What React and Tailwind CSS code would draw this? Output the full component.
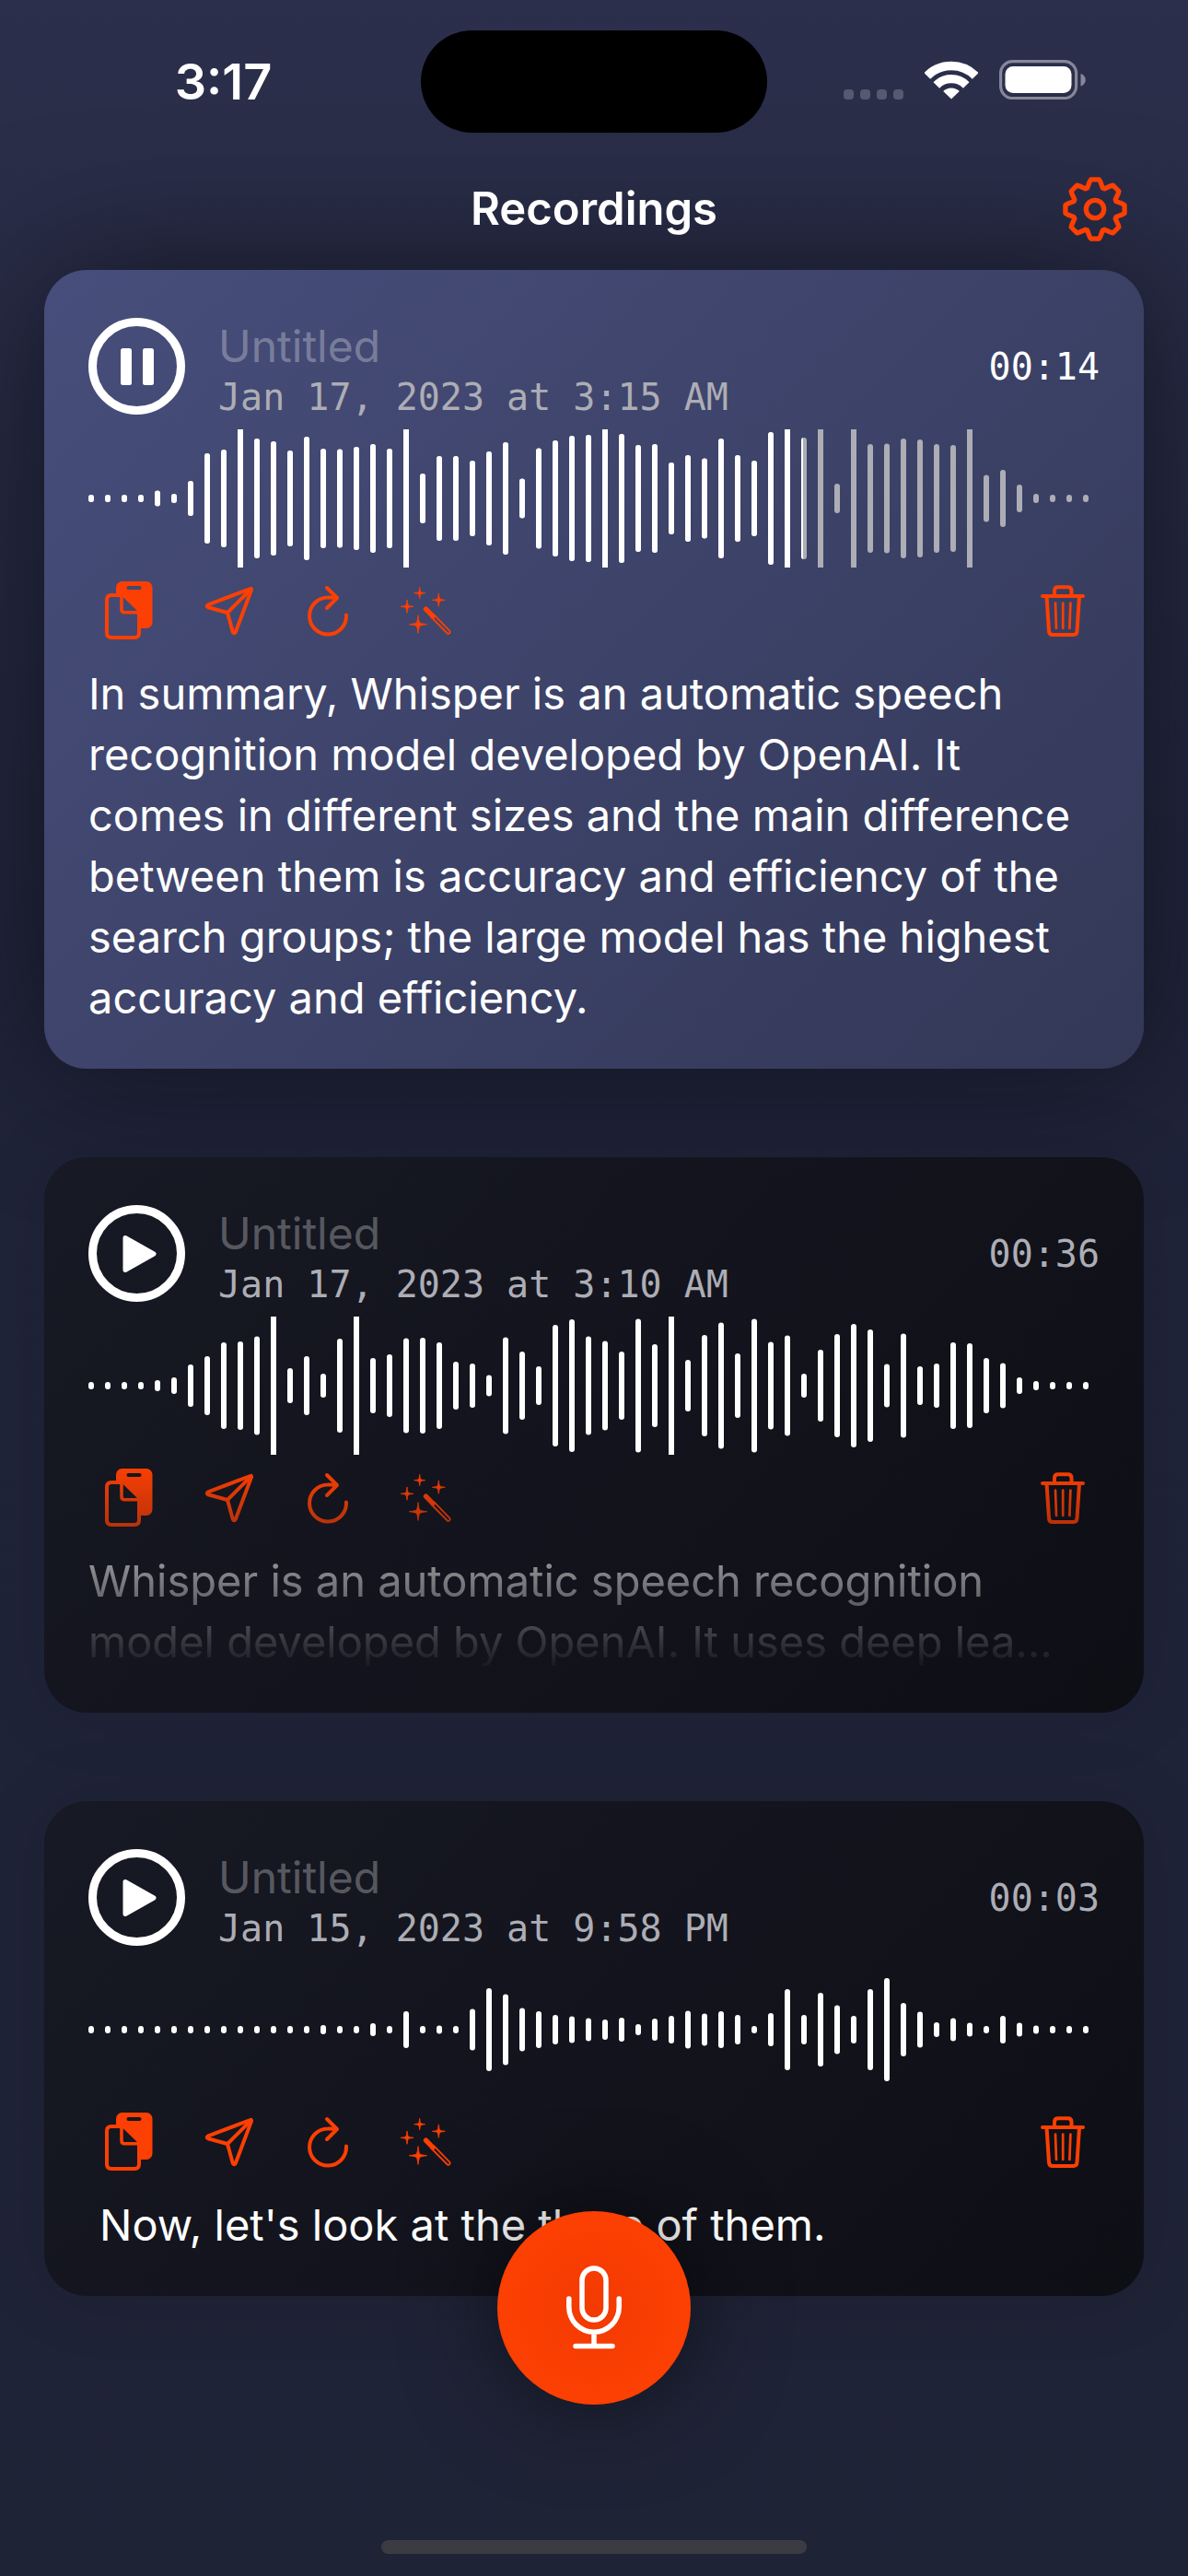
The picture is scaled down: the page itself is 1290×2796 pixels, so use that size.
import React, { useId } from "react";

const recordings = [
  {
    id: "rec-1",
    date: "Jan 17, 2023 at 3:15 AM",
    duration: "00:14",
    playing: true,
    progress: 776,
    text: "In summary, Whisper is an automatic speech recognition model developed by OpenAI. It comes in different sizes and the main difference between them is accuracy and efficiency of the search groups; the large model has the highest accuracy and efficiency.",
    bars: [
      8, 8, 8, 8, 17, 10, 38, 98, 106, 150, 130, 124, 104, 134, 108, 107, 112,
      118, 108, 150, 54, 92, 92, 82, 102, 122, 43, 109, 126, 136, 138, 150, 140,
      116, 118, 78, 94, 87, 130, 94, 82, 144, 150, 132, 150, 32, 150, 118, 119,
      130, 128, 118, 116, 150, 51, 62, 30, 10, 8, 8, 8,
    ],
  },
  {
    id: "rec-2",
    date: "Jan 17, 2023 at 3:10 AM",
    duration: "00:36",
    faded: true,
    text: "Whisper is an automatic speech recognition model developed by OpenAI. It uses deep lea…",
    bars: [
      8, 8, 8, 8, 12, 18, 46, 64, 94, 96, 107, 150, 38, 64, 26, 102, 150, 60, 68,
      103, 104, 94, 52, 48, 23, 105, 74, 42, 132, 144, 107, 97, 74, 145, 90, 150,
      56, 110, 137, 70, 145, 95, 109, 26, 78, 112, 134, 122, 47, 113, 42, 48, 94,
      92, 60, 49, 18, 10, 8, 8, 8,
    ],
  },
  {
    id: "rec-3",
    date: "Jan 15, 2023 at 9:58 PM",
    duration: "00:03",
    indented: true,
    text: "Now, let's look at the three of them.",
    bars: [
      8, 8, 8, 8, 8, 8, 8, 8, 8, 8, 8, 8, 8, 8, 10, 8, 8, 14, 8, 40, 8, 9, 8, 45,
      90, 77, 47, 40, 32, 29, 25, 22, 26, 12, 24, 30, 41, 35, 40, 32, 8, 36, 88,
      32, 80, 53, 30, 88, 112, 58, 39, 16, 25, 15, 8, 30, 15, 9, 8, 8, 8,
    ],
  },
];

function Bars({ bars, fill }) {
  return bars.map((h, i) => (
    <rect
      key={i}
      x={i * 18}
      y={75 - h / 2}
      width={6}
      height={h}
      rx={h >= 150 ? 0 : 3}
      fill={fill}
    />
  ));
}

function Waveform({ bars, progress }) {
  const clip = useId();
  return (
    <svg
      viewBox="0 0 1098 150"
      preserveAspectRatio="xMinYMid meet"
      className="mt-3 block h-[150px] w-full"
      aria-hidden="true"
    >
      {progress === undefined ? (
        <Bars bars={bars} fill="#fff" />
      ) : (
        <>
          <clipPath id={clip}>
            <rect width={progress} height="150" />
          </clipPath>
          <Bars bars={bars} fill="#adadb5" />
          <g clipPath={`url(#${clip})`}>
            <Bars bars={bars} fill="#fff" />
          </g>
        </>
      )}
    </svg>
  );
}

function ActionButton({ label, children }) {
  return (
    <button type="button" aria-label={label} className="block h-[68px] w-16">
      <svg
        viewBox="0 0 64 68"
        className="block h-[68px] w-16"
        fill="none"
        stroke="#fc3f03"
        strokeWidth="4"
        strokeLinecap="round"
        strokeLinejoin="round"
      >
        {children}
      </svg>
    </button>
  );
}

function CopyIcon() {
  const mask = useId();
  return (
    <>
      <mask id={mask}>
        <rect width="64" height="68" fill="#fff" stroke="none" />
        <path d="M8 18H24L26 20.5L41 35L43 37V66H8Z" fill="#000" stroke="none" />
        <path d="M31.5 10H43.5" stroke="#000" />
      </mask>
      <rect
        x="18"
        y="3"
        width="39.5"
        height="51"
        rx="6.5"
        fill="#fc3f03"
        stroke="none"
        mask={`url(#${mask})`}
      />
      <path d="M24 18H13Q8 18 8 23V59Q8 64 13 64H38Q43 64 43 59V37" />
      <path d="M24 18V33.500Q24 36.700 27.200 36.700H43" strokeWidth="3.600" />
    </>
  );
}

function SendIcon() {
  return (
    <>
      <path d="M55.800 11L10 28.400Q7.500 30 10 31.200L31 37L36.800 58Q38.300 60.500 39.800 58L57 12.400Q57.300 10.300 55.800 11Z" />
      <path d="M56 12L31 37" />
    </>
  );
}

function RetryIcon() {
  return (
    <>
      <path d="M52 39.500A20 20 0 1 1 32 20.500Q37 20.300 41 21" />
      <path d="M31 10L42 21L31 32" />
    </>
  );
}

function Sparkle({ x, y, r }) {
  const k = r * 0.2;
  return (
    <path
      stroke="#fc3f03"
      strokeWidth="0.800"
      fill="#fc3f03"
      d={`M${x} ${y - r}Q${x + k / 2} ${y - k} ${x + k} ${y - k}Q${x + k} ${y - k / 2} ${x + r} ${y}Q${x + k} ${y + k / 2} ${x + k} ${y + k}Q${x + k / 2} ${y + k} ${x} ${y + r}Q${x - k / 2} ${y + k} ${x - k} ${y + k}Q${x - k} ${y + k / 2} ${x - r} ${y}Q${x - k} ${y - k / 2} ${x - k} ${y - k}Q${x - k / 2} ${y - k} ${x} ${y - r}Z`}
    />
  );
}

function WandIcon() {
  return (
    <>
      <Sparkle x={23.7} y={15.7} r={6} />
      <Sparkle x={44.3} y={23.3} r={7} />
      <Sparkle x={10} y={30.3} r={7} />
      <Sparkle x={22} y={49.7} r={9.7} />
      <path d="M30.500 33.200L38 40.800" strokeWidth="5.400" />
      <path
        strokeWidth="1.800"
        d="M36.500 42L53.800 59.500Q55 60.300 56.200 59.200Q57.300 58 56.400 56.800L39.200 39.200"
      />
    </>
  );
}

function TrashIcon() {
  return (
    <>
      <path d="M10 19H54M23 19V13Q23 9.300 27 9.300H37.500Q41.500 9.300 41.500 13V19" />
      <path d="M14.500 19L17 57Q17.300 61 21 61H43.500Q47.300 61 47.500 57L50 19" />
      <path strokeWidth="2.700" d="M24 26.500L25 54M32.200 26.500V54M40.400 26.500L39.400 54" />
    </>
  );
}

function gearOutline() {
  const points = [];
  const put = (radius, degrees) => {
    const a = ((degrees - 90) * Math.PI) / 180;
    points.push(
      `${(35 + radius * Math.cos(a)).toFixed(2)} ${(35 + radius * Math.sin(a)).toFixed(2)}`
    );
  };
  for (let t = 0; t < 8; t++) {
    const c = t * 45;
    put(24.5, c - 20);
    put(30, c - 11.5);
    put(32.4, c - 8);
    put(32.4, c + 8);
    put(30, c + 11.5);
    put(24.5, c + 20);
  }
  return `M${points.join("L")}Z`;
}

function GearIcon() {
  return (
    <svg
      viewBox="0 0 70 70"
      className="block size-[70px]"
      fill="none"
      stroke="#fc3f03"
      strokeWidth="5.300"
      strokeLinejoin="round"
    >
      <path d={gearOutline()} />
      <circle cx="35" cy="35" r="9.700" />
    </svg>
  );
}

function StatusBar() {
  return (
    <div className="relative z-10 grid h-[160px] grid-cols-[1fr_376px_1fr] items-start pt-[33px]">
      <div className="flex h-[111px] items-center justify-center pl-7 text-[54px] leading-none font-semibold">
        3:17
      </div>
      <div className="h-[111px] rounded-full bg-black" />
      <div className="flex h-[107px] items-center justify-center pr-7">
        <div className="mr-[23px] flex h-[43px] items-end gap-[7px]">
          {[0, 1, 2, 3].map((i) => (
            <span key={i} className="size-[11px] rounded-[4px] bg-[#565a70]" />
          ))}
        </div>
        <svg
          viewBox="0 0 58 43"
          className="block h-[43px] w-[58px]"
          fill="none"
          stroke="#fff"
          aria-label="Wi-Fi"
        >
          <path strokeWidth="9.500" d="M2.800 17.400A36.800 36.800 0 0 1 55.200 17.400" />
          <path strokeWidth="9.200" d="M12.800 27.500A22.700 22.700 0 0 1 45.200 27.500" />
          <path d="M29 42.500L20.200 34A12.500 12.500 0 0 1 37.800 34Z" fill="#fff" stroke="none" />
        </svg>
        <svg
          viewBox="0 0 95 43"
          className="ml-[23px] block h-[43px] w-[95px]"
          aria-label="Battery"
        >
          <rect x="1.600" y="1.600" width="82" height="40" rx="13" fill="none" stroke="#858899" strokeWidth="3.200" />
          <rect x="6.500" y="7" width="72" height="29" rx="8.500" fill="#fff" />
          <path d="M88.500 15C95.500 17 95.500 26.500 88.500 28.500Z" fill="#858899" />
        </svg>
      </div>
    </div>
  );
}

function PlayButton({ playing }) {
  return (
    <button
      type="button"
      aria-label={playing ? "Pause" : "Play"}
      className="flex size-[105px] shrink-0 items-center justify-center rounded-full border-[9px] border-white"
    >
      <svg viewBox="0 0 48 48" className="block size-12 fill-white stroke-white">
        {playing ? (
          <>
            <rect x="6" y="4" width="12" height="40" rx="2.500" stroke="none" />
            <rect x="30" y="4" width="12" height="40" rx="2.500" stroke="none" />
          </>
        ) : (
          <path
            d="M11 6.500L42 24L11 41.500Z"
            strokeWidth="5"
            strokeLinejoin="round"
          />
        )}
      </svg>
    </button>
  );
}

function RecordingCard({ rec }) {
  return (
    <article
      className={
        rec.playing
          ? "rounded-[46px] bg-linear-135 from-[#474e7b] to-[#333857] px-12 pt-12 pb-11 shadow-[0_0_150px_rgba(0,0,0,0.5)]"
          : "rounded-[46px] bg-linear-135 from-[#171924] to-[#0e0e15] px-12 pt-12 pb-11 shadow-[0_0_80px_rgba(0,0,0,0.12)]"
      }
    >
      <div className="flex h-[113px] items-center gap-9">
        <PlayButton playing={rec.playing} />
        <div className="min-w-0 flex-1 pt-0.5">
          <input
            type="text"
            aria-label="Recording title"
            placeholder="Untitled"
            className="block h-16 w-full bg-transparent text-[48px] placeholder:text-white/30 focus:outline-none"
          />
          <div className="font-['DejaVu_Sans_Mono',monospace] text-[40px] leading-[46px] text-[#adadb5]">
            {rec.date}
          </div>
        </div>
        <div
          className={
            rec.playing
              ? "font-['DejaVu_Sans_Mono',monospace] text-[40px] leading-[46px] text-white"
              : "font-['DejaVu_Sans_Mono',monospace] text-[40px] leading-[46px] text-[#adadb5]"
          }
        >
          {rec.duration}
        </div>
      </div>
      <Waveform bars={rec.bars} progress={rec.progress} />
      <div
        className={
          rec.faded ? "mt-3 mask-linear-180 mask-linear-from-0% mask-linear-to-100%" : "mt-3"
        }
      >
        <div className="flex gap-11 pr-2 pl-3">
          <ActionButton label="Copy">
            <CopyIcon />
          </ActionButton>
          <ActionButton label="Share">
            <SendIcon />
          </ActionButton>
          <ActionButton label="Transcribe again">
            <RetryIcon />
          </ActionButton>
          <ActionButton label="Enhance">
            <WandIcon />
          </ActionButton>
          <div className="ml-auto">
            <ActionButton label="Delete">
              <TrashIcon />
            </ActionButton>
          </div>
        </div>
        <p className={rec.indented ? "mt-6 pl-3 text-[47px] leading-[66px]" : "mt-6 text-[47px] leading-[66px]"}>
          {rec.text}
        </p>
      </div>
    </article>
  );
}

export default function App() {
  return (
    <div className="flex min-h-screen flex-col bg-linear-to-b from-[#2b2f4b] via-[#20243a] via-40% to-[#1f2336] font-['Inter',sans-serif] text-white">
      <StatusBar />
      <header className="relative z-10 grid h-[133px] grid-cols-[1fr_auto_1fr] items-center px-[66px]">
        <h1 className="col-start-2 text-[49px] leading-none font-semibold">Recordings</h1>
        <button type="button" aria-label="Settings" className="justify-self-end">
          <GearIcon />
        </button>
      </header>
      <main className="flex flex-col gap-24 px-12 pb-[304px]">
        {recordings.map((rec) => (
          <RecordingCard key={rec.id} rec={rec} />
        ))}
      </main>
      <button
        type="button"
        aria-label="Record"
        className="fixed bottom-[186px] left-1/2 flex size-[210px] -translate-x-1/2 items-center justify-center rounded-full bg-radial from-[#f23a02] to-[#fc3f02] to-60% shadow-[0_0_100px_rgba(0,0,0,0.5)]"
      >
        <svg
          viewBox="0 0 60 92"
          className="block h-[92px] w-[60px]"
          fill="none"
          stroke="#fff"
          strokeWidth="5.500"
          strokeLinecap="round"
        >
          <rect x="17" y="3" width="26" height="56" rx="13" />
          <path d="M2.800 36V45A27.200 27.200 0 0 0 57.200 45V36M30 73V86M10 87.500H50" />
        </svg>
      </button>
      <div className="fixed bottom-6 left-1/2 h-[15px] w-[462px] -translate-x-1/2 rounded-full bg-[#3b3c43]" />
    </div>
  );
}
